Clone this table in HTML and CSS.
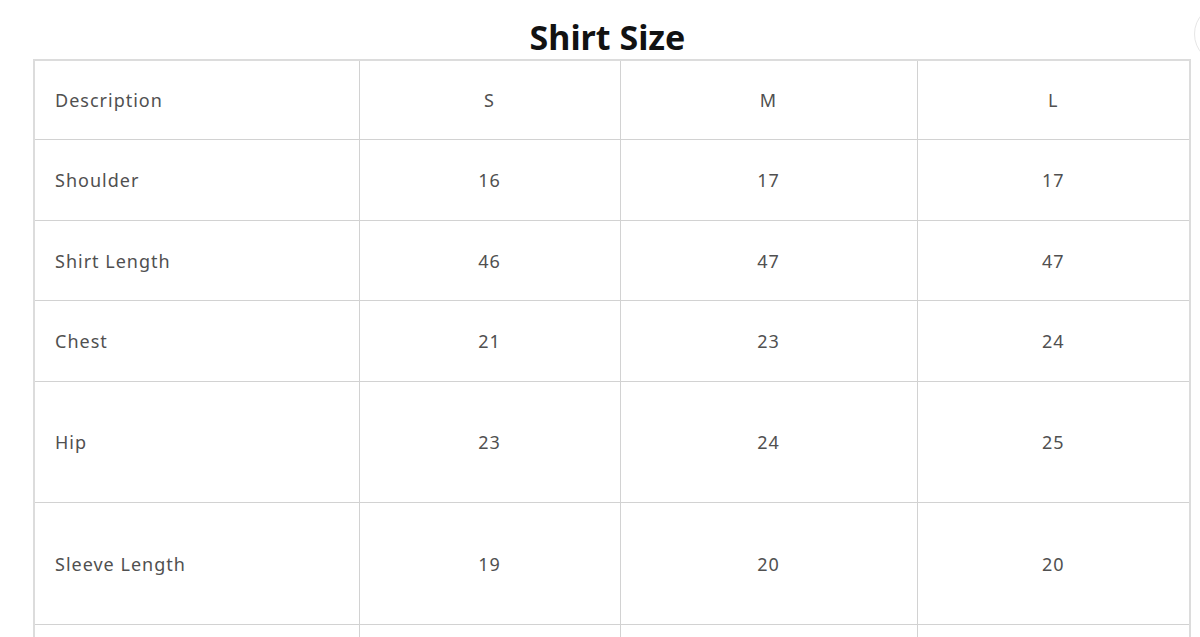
FILE: index.html
```html
<!DOCTYPE html>
<html>
<head>
<meta charset="utf-8">
<link rel="stylesheet" href="styles.css">
</head>
<body>
<div class="page">
  <h2 class="title">Shirt Size</h2>
  <table class="size-table">
    <colgroup>
      <col class="c1"><col class="c2"><col class="c3"><col class="c4">
    </colgroup>
    <tr class="r-head"><td class="label">Description</td><td>S</td><td>M</td><td>L</td></tr>
    <tr class="r-a"><td class="label">Shoulder</td><td>16</td><td>17</td><td>17</td></tr>
    <tr class="r-b"><td class="label">Shirt Length</td><td>46</td><td>47</td><td>47</td></tr>
    <tr class="r-a"><td class="label">Chest</td><td>21</td><td>23</td><td>24</td></tr>
    <tr class="r-c"><td class="label">Hip</td><td>23</td><td>24</td><td>25</td></tr>
    <tr class="r-d"><td class="label">Sleeve Length</td><td>19</td><td>20</td><td>20</td></tr>
    <tr class="r-a"><td class="label">&nbsp;</td><td></td><td></td><td></td></tr>
  </table>
</div>
<div class="edge-circle"></div>
</body>
</html>
```

FILE: styles.css
```css
html, body {
  margin: 0;
  padding: 0;
  background: #fff;
  overflow: hidden;
}
.page {
  padding: 0 10px 0 33px;
  font-family: "Noto Sans", "Open Sans", sans-serif;
}
.title {
  margin: 0;
  height: 59px;
  padding-top: 15px;
  box-sizing: border-box;
  text-align: center;
  font-size: 34px;
  line-height: 44px;
  font-weight: 700;
  color: #121212;
  padding-right: 8px;
}
.size-table {
  border-collapse: collapse;
  width: 1157px;
  table-layout: fixed;
  border: 2px solid #dcdcdc;
}
.c1 { width: 325px; }
.c2 { width: 261px; }
.c3 { width: 297px; }
.c4 { width: 273px; }
.size-table td {
  border: 1px solid #d2d2d2;
  text-align: center;
  vertical-align: middle;
  font-size: 18px;
  color: #505050;
  letter-spacing: 1px;
  padding: 0;
}
.size-table td.label {
  text-align: left;
  padding-left: 20px;
}
.r-head td { height: 78px; }
.r-a td { height: 80px; }
.r-b td { height: 79px; }
.r-c td { height: 120px; }
.r-d td { height: 121px; }
.edge-circle {
  position: absolute;
  left: 1194px;
  top: 4px;
  width: 60px;
  height: 60px;
  border-radius: 50%;
  border: 1px solid #e6e6e6;
  box-sizing: border-box;
}
```
